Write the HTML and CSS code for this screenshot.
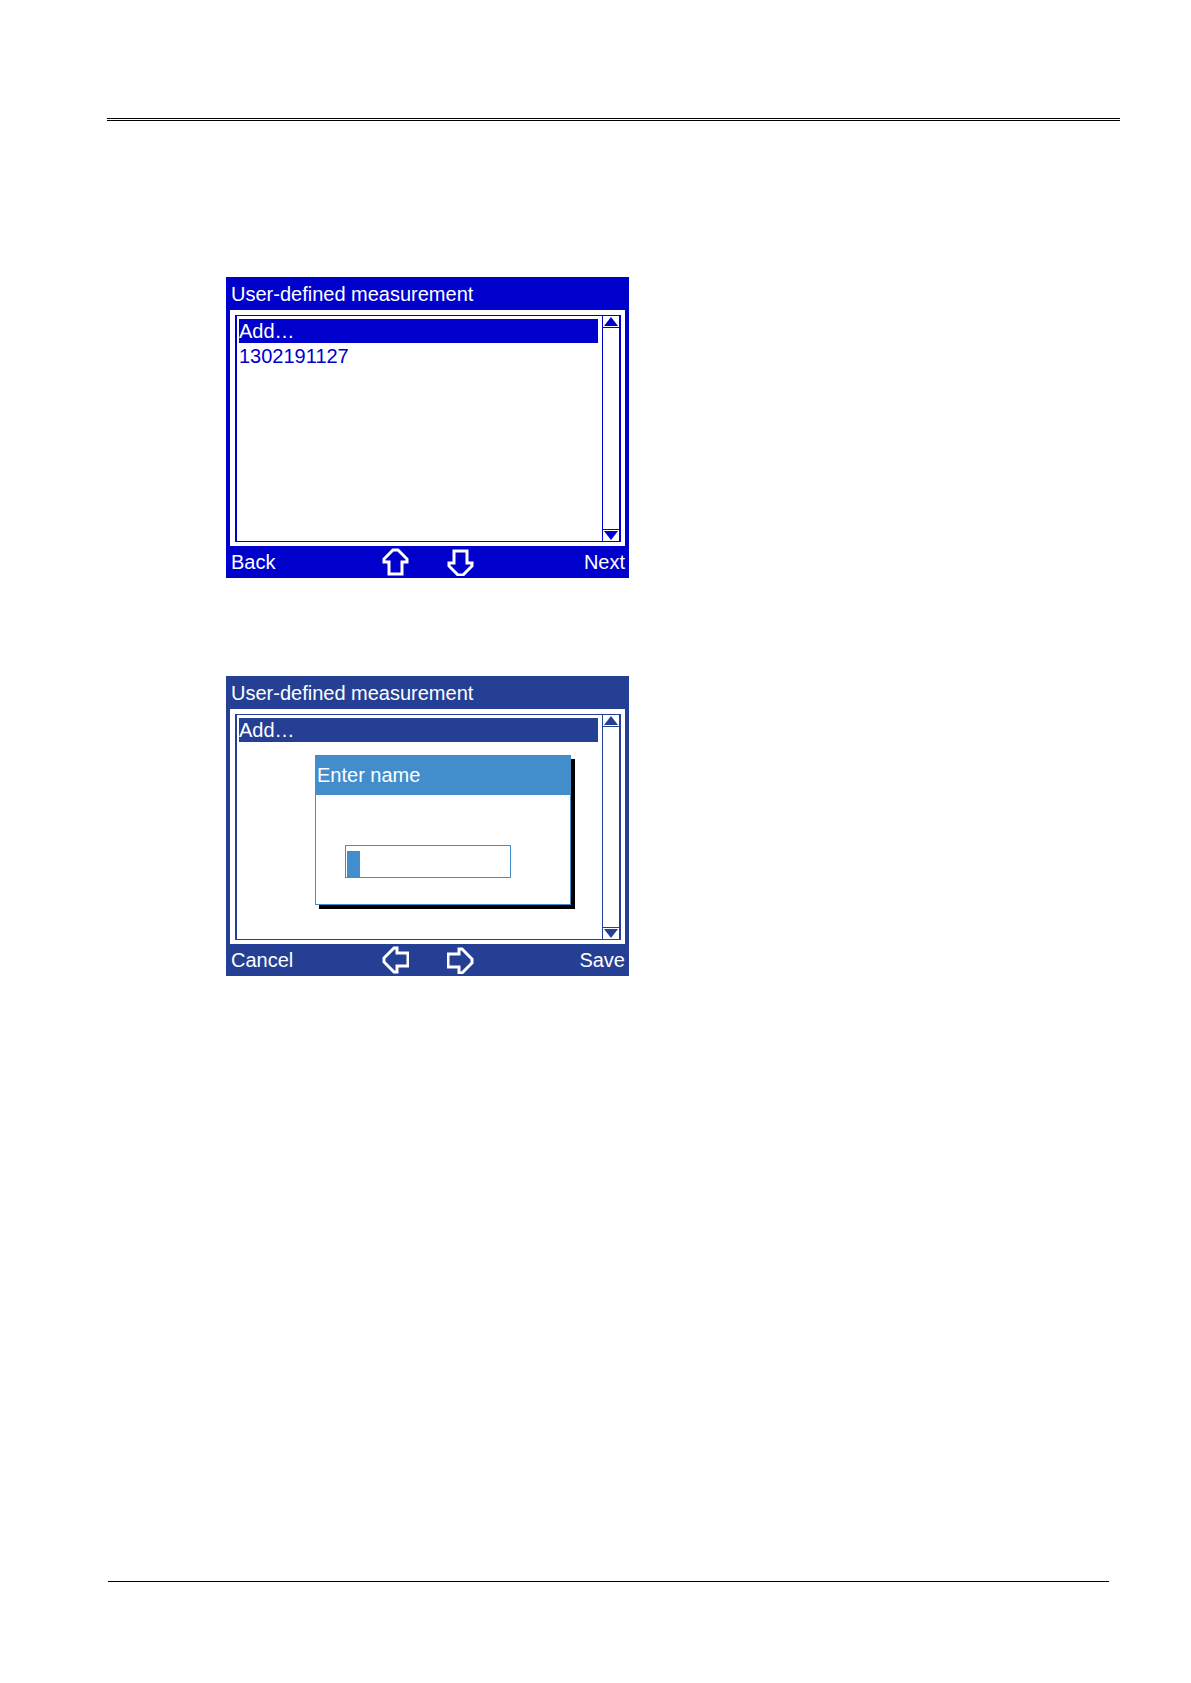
FILE: index.html
```
<!DOCTYPE html>
<html lang="en">
<head>
    <meta charset="UTF-8">
    <meta name="viewport" content="width=device-width, initial-scale=1.0">
    <title>User-defined measurement</title>
    <link rel="stylesheet" href="styles.css">
</head>
<body>
    <header class="page-header"></header>

    <main class="content">
        <!-- List of measurements -->
        <section class="screen">
            <h2 class="screen-title">User-defined measurement</h2>
            <div class="panel">
                <div class="frame">
                    <ul class="list">
                        <li><button class="list-item selected">Add…</button></li>
                        <li><button class="list-item">1302191127</button></li>
                    </ul>
                    <div class="scrollbar">
                        <button class="scroll-button up" aria-label="Scroll up">
                            <svg width="14" height="9" viewBox="0 0 14 9"><path d="M7 0L14 9H0z"/></svg>
                        </button>
                        <button class="scroll-button down" aria-label="Scroll down">
                            <svg width="14" height="9" viewBox="0 0 14 9"><path d="M0 0H14L7 9z"/></svg>
                        </button>
                    </div>
                </div>
            </div>
            <div class="softkeys">
                <button class="softkey">Back</button>
                <button class="arrow-key" aria-label="Up">
                    <svg width="27" height="28" viewBox="0 0 27 28"><path d="M11 2H16L25 11V14H20V26H7V14H2V11z"/></svg>
                </button>
                <button class="arrow-key" aria-label="Down">
                    <svg width="27" height="28" viewBox="0 0 27 28"><path d="M7 3H20V15H25V18L16 27H11L2 18V15H7z"/></svg>
                </button>
                <button class="softkey right">Next</button>
            </div>
        </section>

        <!-- Name entry -->
        <section class="screen dark">
            <h2 class="screen-title">User-defined measurement</h2>
            <div class="panel">
                <div class="frame">
                    <ul class="list">
                        <li><button class="list-item selected">Add…</button></li>
                    </ul>
                    <div class="scrollbar">
                        <button class="scroll-button up" aria-label="Scroll up">
                            <svg width="14" height="9" viewBox="0 0 14 9"><path d="M7 0L14 9H0z"/></svg>
                        </button>
                        <button class="scroll-button down" aria-label="Scroll down">
                            <svg width="14" height="9" viewBox="0 0 14 9"><path d="M0 0H14L7 9z"/></svg>
                        </button>
                    </div>
                </div>
            </div>
            <div class="softkeys">
                <button class="softkey">Cancel</button>
                <button class="arrow-key" aria-label="Left">
                    <svg width="27" height="28" viewBox="0 0 27 28"><path d="M2 12L12 2H15V7H26V20H15V26H12L2 16z"/></svg>
                </button>
                <button class="arrow-key" aria-label="Right">
                    <svg width="27" height="28" viewBox="0 0 27 28"><path d="M1 8H12V3H15L25 13V17L15 27H12V21H1z"/></svg>
                </button>
                <button class="softkey right">Save</button>
            </div>
            <form class="dialog">
                <label class="dialog-title" for="nameInput">Enter name</label>
                <div class="field">
                    <span class="cursor"></span>
                    <input type="text" id="nameInput" class="name-input">
                </div>
            </form>
        </section>
    </main>

    <footer class="page-footer"></footer>
</body>
</html>
```

FILE: styles.css
```
* {
    box-sizing: border-box;
}
body {
    margin: 0;
    min-height: 100vh;
    display: flex;
    flex-direction: column;
    background-color: #fff;
    font-family: Arial, "Liberation Sans", sans-serif;
    font-size: 20px;
}
.page-header {
    margin: 118px 71px 0 107px;
    border-top: 3px double #000;
}
.page-footer {
    margin: 0 82px 101px 108px;
    border-top: 1px solid #000;
}
.content {
    flex: 1;
    display: flex;
    flex-direction: column;
    gap: 98px;
    padding: 156px 71px 60px 226px;
}
.screen {
    --ink: #0000cc;
    position: relative;
    width: 100%;
    max-width: 403px;
    padding: 0 4px;
    background-color: var(--ink);
    color: #fff;
}
.screen.dark {
    --ink: #243f94;
}
.screen-title {
    margin: 0;
    padding: 2px 0 0 1px;
    font-size: 20px;
    font-weight: normal;
    line-height: 31px;
}
button {
    padding: 0;
    border: none;
    background: none;
    color: inherit;
    font: inherit;
    cursor: pointer;
}
svg {
    display: block;
}
.panel {
    padding: 5px 4px 4px 5px;
    background-color: #fff;
}
.frame {
    display: flex;
    height: 227px;
    border: 1px solid var(--ink);
    border-width: 1px 2px;
}
.dark .frame {
    height: 226px;
}
.list {
    flex: 1;
    display: flex;
    flex-direction: column;
    gap: 1px;
    margin: 0;
    padding: 3px 4px 0 2px;
    list-style: none;
}
.list-item {
    display: block;
    width: 100%;
    color: var(--ink);
    line-height: 24px;
    text-align: left;
}
.list-item.selected {
    background-color: var(--ink);
    color: #fff;
}
.scrollbar {
    display: flex;
    flex-direction: column;
    justify-content: space-between;
    width: 17px;
    border-left: 1px solid var(--ink);
}
.scroll-button {
    display: flex;
    justify-content: center;
    height: 12px;
    padding-top: 1px;
    fill: var(--ink);
}
.scroll-button.up {
    border-bottom: 1px solid var(--ink);
}
.scroll-button.down {
    border-top: 1px solid var(--ink);
}
.softkeys {
    display: grid;
    grid-template-columns: 1fr auto auto 1fr;
    column-gap: 38px;
    align-items: center;
    height: 32px;
}
.softkey {
    padding: 1px 0 0 1px;
    line-height: 31px;
    text-align: left;
}
.softkey.right {
    text-align: right;
}
.arrow-key svg {
    fill: none;
    stroke: #fff;
    stroke-width: 3;
}
.dialog {
    position: absolute;
    top: 79px;
    left: 89px;
    width: 256px;
    padding-bottom: 26px;
    border: 1px solid #428dcc;
    background-color: #fff;
    box-shadow: 4px 4px 0 #000;
}
.dialog-title {
    display: block;
    padding-left: 1px;
    background-color: #428dcc;
    line-height: 39px;
}
.field {
    display: flex;
    align-items: flex-end;
    width: 166px;
    height: 33px;
    margin: 50px 0 0 29px;
    padding-left: 1px;
    border: 1px solid #428dcc;
}
.cursor {
    width: 13px;
    height: 26px;
    background-color: #428dcc;
}
.name-input {
    flex: 1;
    min-width: 0;
    height: 26px;
    padding: 0 2px;
    border: none;
    outline: none;
    background: none;
    color: #428dcc;
    font: inherit;
}
```
